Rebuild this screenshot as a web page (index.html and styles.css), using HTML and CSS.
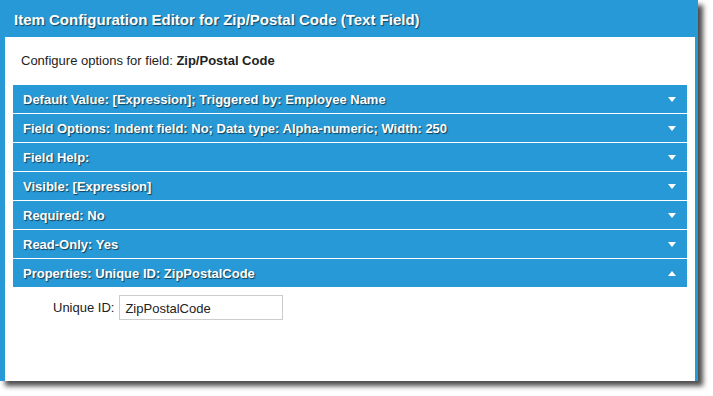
FILE: index.html
```html
<!DOCTYPE html>
<html>
<head>
<meta charset="utf-8">
<link rel="stylesheet" href="styles.css">
</head>
<body>
<div class="window">
  <div class="title">Item Configuration Editor for Zip/Postal Code (Text Field)</div>
  <div class="content">
    <div class="intro">Configure options for field: <span class="field">Zip/Postal Code</span></div>
    <div class="sections">
      <div class="bar"><span>Default Value: [Expression]; Triggered by: Employee Name</span><i class="arrow down"></i></div>
      <div class="bar"><span>Field Options: Indent field: No; Data type: Alpha-numeric; Width: 250</span><i class="arrow down"></i></div>
      <div class="bar"><span>Field Help:</span><i class="arrow down"></i></div>
      <div class="bar"><span>Visible: [Expression]</span><i class="arrow down"></i></div>
      <div class="bar"><span>Required: No</span><i class="arrow down"></i></div>
      <div class="bar"><span>Read-Only: Yes</span><i class="arrow down"></i></div>
      <div class="bar"><span>Properties: Unique ID: ZipPostalCode</span><i class="arrow up"></i></div>
    </div>
    <div class="row">
      <label class="label">Unique ID:</label>
      <div class="input">ZipPostalCode</div>
    </div>
  </div>
</div>
</body>
</html>
```
FILE: styles.css
```css
html, body {
  margin: 0;
  padding: 0;
  background: #ffffff;
}
body {
  font-family: "Liberation Sans", Arial, sans-serif;
  height: 396px;
}
.window {
  width: 690px;
  height: 381px;
  background: #2899d7;
  border-left: 5px solid #2899d7;
  border-right: 3px solid #2899d7;
  display: flex;
  flex-direction: column;
  box-shadow: 5px 5px 5px rgba(0, 0, 0, 0.7);
}
.title {
  height: 37px;
  box-sizing: border-box;
  padding: 11px 0 0 9px;
  color: #ffffff;
  font-weight: bold;
  font-size: 15px;
  text-shadow: 1px 1px 1px rgba(0, 0, 0, 0.55);
}
.content {
  flex: 1;
  background: #ffffff;
  padding: 0 8px;
}
.intro {
  font-size: 13px;
  color: #222222;
  padding: 16px 0 0 8px;
  box-sizing: border-box;
  height: 48px;
}
.field {
  font-weight: bold;
}
.sections {
  display: flex;
  flex-direction: column;
  gap: 1px;
}
.bar {
  height: 28px;
  background: #2899d7;
  color: #ffffff;
  font-weight: bold;
  font-size: 13px;
  display: flex;
  align-items: center;
  justify-content: space-between;
  padding: 0 11px 0 10px;
  text-shadow: 1px 1px 1px rgba(0, 0, 0, 0.6);
}
.arrow {
  width: 0;
  height: 0;
  border-left: 4.5px solid transparent;
  border-right: 4.5px solid transparent;
}
.arrow.down {
  border-top: 5px solid #ffffff;
}
.arrow.up {
  border-bottom: 5px solid #ffffff;
}
.row {
  display: flex;
  align-items: center;
  margin-top: 8px;
  padding-left: 40px;
  gap: 5px;
}
.label {
  font-size: 13px;
  color: #222222;
}
.input {
  width: 164px;
  height: 25px;
  box-sizing: border-box;
  border: 1px solid #cccccc;
  font-size: 13px;
  color: #222222;
  padding: 5px 0 0 5px;
}
```
